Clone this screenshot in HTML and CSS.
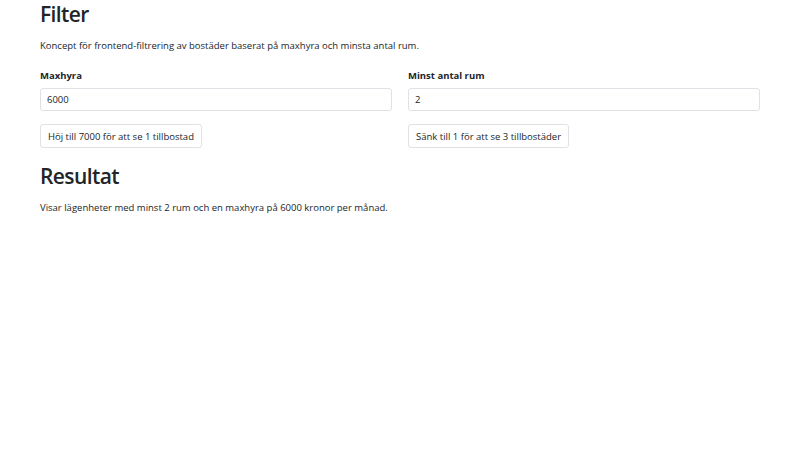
FILE: index.html
```html
<!DOCTYPE html>
<html>
<head>
  <title>Filter</title>
  <link rel="stylesheet" href="styles.css">
</head>
<body>
  <div class="container">
    <h1>Filter</h1>
    <p>Koncept för frontend-filtrering av bostäder baserat på maxhyra och minsta antal rum.</p>
    <div class="row">
      <div class="col">
        <label for="maxhyra">Maxhyra</label>
        <input type="text" id="maxhyra" value="6000">
        <button>Höj till 7000 för att se 1 tillbostad</button>
      </div>
      <div class="col">
        <label for="rum">Minst antal rum</label>
        <input type="text" id="rum" value="2">
        <button>Sänk till 1 för att se 3 tillbostäder</button>
      </div>
    </div>
    <h1 class="results">Resultat</h1>
    <p>Visar lägenheter med minst 2 rum och en maxhyra på 6000 kronor per månad.</p>
  </div>
</body>
</html>
```

FILE: styles.css
```css
body {
  margin: 0;
  font-family: "Open Sans", "Noto Sans", sans-serif;
  font-size: 9.5px;
  color: #212529;
  background: #ffffff;
}
.container {
  width: 720px;
  margin: 0 auto;
}
h1 {
  font-size: 21px;
  font-weight: 600;
  letter-spacing: -0.6px;
  line-height: 28px;
  margin: 0 0 9px 0;
}
h1.results {
  margin-top: 14px;
}
p {
  margin: 0 0 12px 0;
  line-height: 18px;
}
.row {
  display: flex;
  gap: 16px;
}
.col {
  flex: 1;
  display: flex;
  flex-direction: column;
  align-items: flex-start;
}
label {
  font-weight: bold;
  margin: 2px 0 6px 0;
}
input[type="text"] {
  width: 100%;
  box-sizing: border-box;
  height: 23px;
  padding: 0 6px;
  border: 1px solid #dee2e6;
  border-radius: 3px;
  font: inherit;
  color: #212529;
}
button {
  margin-top: 13px;
  height: 24px;
  padding: 0 7px;
  background: #ffffff;
  border: 1px solid #dee2e6;
  border-radius: 3px;
  font: inherit;
  color: #212529;
}
```
